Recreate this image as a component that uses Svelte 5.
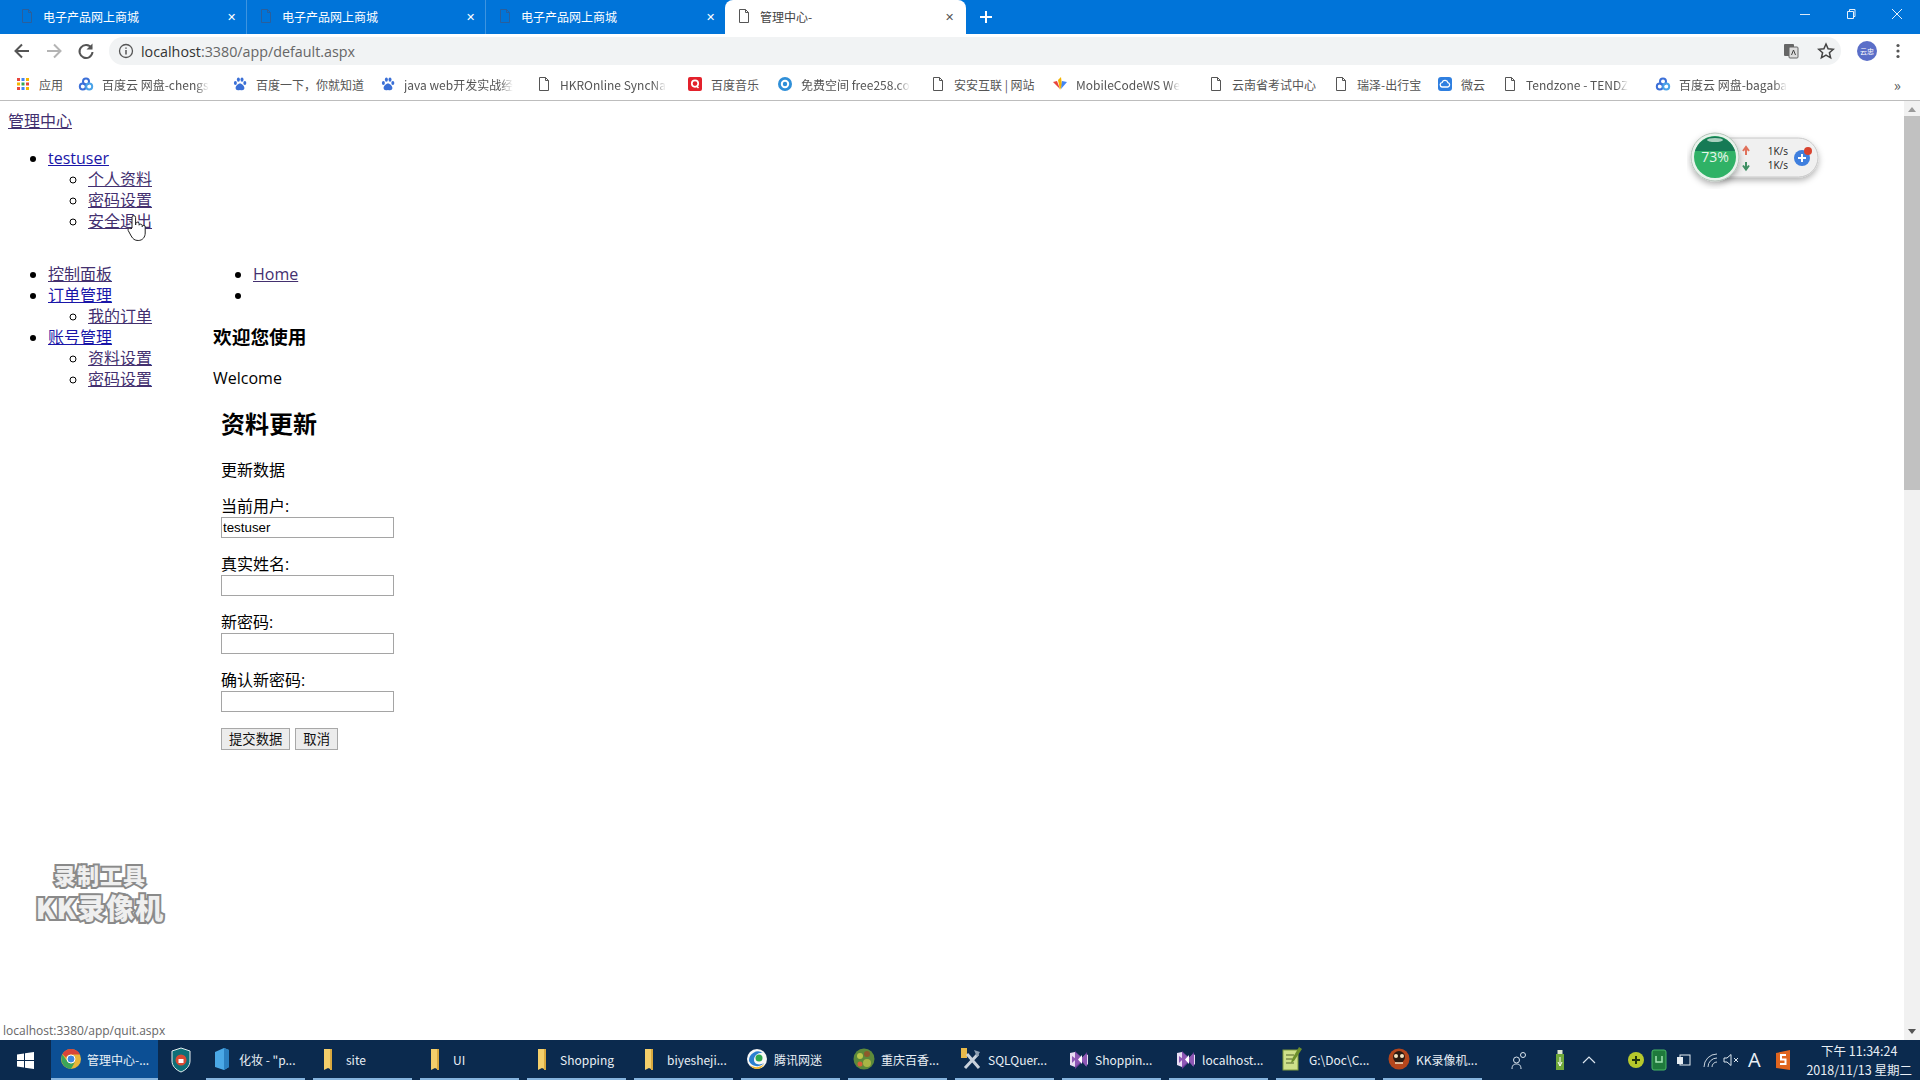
<script>
	const tabs = ['电子产品网上商城', '电子产品网上商城', '电子产品网上商城'];

	// labels stop where the browser fades them out
	const bookmarks = [
		{ label: '应用', icon: 'apps', width: 63, fade: false },
		{ label: '百度云 网盘-chengs', icon: 'pan', width: 154, fade: true },
		{ label: '百度一下，你就知道', icon: 'paw', width: 148, fade: false },
		{ label: 'java web开发实战经', icon: 'paw', width: 156, fade: true },
		{ label: 'HKROnline SyncNa', icon: 'doc', width: 151, fade: true },
		{ label: '百度音乐', icon: 'q', width: 90, fade: false },
		{ label: '免费空间 free258.co', icon: 'ring', width: 153, fade: true },
		{ label: '安安互联 | 网站', icon: 'doc', width: 122, fade: false },
		{ label: 'MobileCodeWS We', icon: 'm', width: 156, fade: true },
		{ label: '云南省考试中心', icon: 'doc', width: 125, fade: false },
		{ label: '瑞泽-出行宝', icon: 'doc', width: 104, fade: false },
		{ label: '微云', icon: 'cloud', width: 65, fade: false },
		{ label: 'Tendzone - TENDZ', icon: 'doc', width: 153, fade: true },
		{ label: '百度云 网盘-bagaba', icon: 'pan', width: 150, fade: true }
	];

	const sideMenu = [
		{ label: '控制面板', seen: true, sub: [] },
		{ label: '订单管理', seen: false, sub: ['我的订单'] },
		{ label: '账号管理', seen: false, sub: ['资料设置', '密码设置'] }
	];

	const fields = [
		{ label: '当前用户:', value: 'testuser' },
		{ label: '真实姓名:', value: '' },
		{ label: '新密码:', value: '' },
		{ label: '确认新密码:', value: '' }
	];

	const taskItems = [
		{ label: '化妆 - "p...', icon: 'box' },
		{ label: 'site', icon: 'folder' },
		{ label: 'UI', icon: 'folder' },
		{ label: 'Shopping', icon: 'folder' },
		{ label: 'biyesheji...', icon: 'folder' },
		{ label: '腾讯网迷', icon: 'tencent' },
		{ label: '重庆百香...', icon: 'photo' },
		{ label: 'SQLQuer...', icon: 'tools' },
		{ label: 'Shoppin...', icon: 'vs' },
		{ label: 'localhost...', icon: 'vs' },
		{ label: 'G:\\Doc\\C...', icon: 'note' },
		{ label: 'KK录像机...', icon: 'kk' }
	];
</script>

{#snippet markIcon(kind)}
	<svg class="mark" width="16" height="16" viewBox="0 0 16 16">
		{#if kind === 'apps'}
			{#each [2, 6.5, 11] as y, row}
				{#each [2, 6.5, 11] as x, col}
					<rect {x} {y} width="3" height="3" fill={['#e8453c', '#4285f4', '#f4b400', '#34a853'][(row * 2 + col) % 4]} />
				{/each}
			{/each}
		{:else if kind === 'pan'}
			<circle cx="8" cy="5.5" r="3" fill="none" stroke="#3b6fd8" stroke-width="2" />
			<circle cx="4.8" cy="10.5" r="3" fill="none" stroke="#3b6fd8" stroke-width="2" />
			<circle cx="11.2" cy="10.5" r="3" fill="none" stroke="#4aa3e8" stroke-width="2" />
		{:else if kind === 'paw'}
			<g fill="#3a6fd6">
				<ellipse cx="3.4" cy="7" rx="1.5" ry="2" />
				<ellipse cx="6.4" cy="3.6" rx="1.5" ry="2.2" />
				<ellipse cx="10" cy="3.6" rx="1.5" ry="2.2" />
				<ellipse cx="12.8" cy="7" rx="1.5" ry="2" />
				<path d="M8 7.5c-2 0-4.4 2.6-4.4 4.6 0 1.5 1.2 2.2 2.3 2.2.8 0 1.4-.3 2.1-.3s1.3.3 2.1.3c1.1 0 2.3-.7 2.3-2.2 0-2-2.4-4.6-4.4-4.6z" />
			</g>
		{:else if kind === 'doc'}
			<path d="M3.5 1.5h6l3 3v10h-9z M9.5 1.5v3h3" fill="#fff" stroke="#555" stroke-width="1" />
		{:else if kind === 'q'}
			<rect x="1" y="1" width="14" height="14" rx="2" fill="#e3212b" />
			<circle cx="8" cy="7.6" r="3.2" fill="none" stroke="#fff" stroke-width="1.7" />
			<path d="M9.5 10l2 2" stroke="#fff" stroke-width="1.6" />
		{:else if kind === 'ring'}
			<circle cx="8" cy="8" r="7" fill="#2f8fd8" />
			<circle cx="8" cy="8" r="3.2" fill="none" stroke="#fff" stroke-width="2" />
		{:else if kind === 'm'}
			<path d="M1 6l4-1 3 8z" fill="#e8453c" />
			<path d="M6 4l3-3 1 8-2 5z" fill="#f4b400" />
			<path d="M10 5l5 1-6 7z" fill="#4285f4" />
		{:else if kind === 'cloud'}
			<rect x="1" y="1" width="14" height="14" rx="3" fill="#2f7fe0" />
			<path d="M5 11a2.4 2.4 0 0 1 .2-4.700a3 3 0 0 1 5.700.4a2.200 2.200 0 0 1 0 4.300z" fill="none" stroke="#fff" stroke-width="1.300" />
		{/if}
	</svg>
{/snippet}

{#snippet taskIcon(kind)}
	<svg class="task-icon" width="22" height="26" viewBox="0 0 22 26">
		{#if kind === 'box'}
			<path d="M4 6l9-4 5 2v17l-5 3-9-3z" fill="#4aa8e6" />
			<path d="M13 2v22l5-3V4z" fill="#2b7fc0" />
		{:else if kind === 'folder'}
			<path d="M6 3h6l2 2v19l-4-2-4 2z" fill="#f4cf6b" />
			<path d="M12 3h2v21h-2z" fill="#d9a93f" />
		{:else if kind === 'tencent'}
			<circle cx="11" cy="13" r="10" fill="#f7f7f7" />
			<path d="M3 15a9 9 0 0 1 14-8c-4-1-9 2-9 7 0 4 5 6 10 3a9 9 0 0 1-15-2z" fill="#2a7fd0" />
			<path d="M4 19c4 3 10 3 14-1-1 3-4 5-7 5s-6-2-7-4z" fill="#f0b429" />
			<circle cx="13" cy="12" r="3.500" fill="#2fa84f" />
		{:else if kind === 'photo'}
			<circle cx="11" cy="13" r="10.500" fill="#5d8a3a" />
			<circle cx="7" cy="10" r="3" fill="#b9c64a" />
			<circle cx="14" cy="8" r="3" fill="#8d5a2b" />
			<circle cx="14" cy="17" r="4" fill="#a8b545" />
			<circle cx="7" cy="18" r="2.500" fill="#d65f3a" />
		{:else if kind === 'tools'}
			<rect x="1" y="2" width="6" height="10" fill="#e8b94a" />
			<path d="M5 22L18 8M7 8l12 14" stroke="#c9d2dc" stroke-width="3" />
			<path d="M14 4l6 2-3 5z" fill="#8ea0b3" />
		{:else if kind === 'vs'}
			<path d="M3 7l5-1 7 6 4-4 2 1v9l-2 2-4-5-7 6-5-2z" fill="#e8dcf3" />
			<path d="M8 5l7 7 5-6v15l-5-5-7 7z M5 10l4 3-4 4z" fill="#7c3fa8" opacity=".85" />
			<path d="M15 9v9l-4-4.500z" fill="#fff" />
		{:else if kind === 'note'}
			<rect x="2" y="4" width="15" height="20" fill="#cfe08a" stroke="#7e9a3c" />
			<path d="M5 9h8M5 13h6M5 17h8" stroke="#50622a" />
			<path d="M18 1l3 2-8 12-3 2 1-4z" fill="#6d8f2c" />
		{:else if kind === 'kk'}
			<circle cx="11" cy="13" r="10.500" fill="#b5461c" />
			<circle cx="11" cy="11" r="6" fill="#2a1a12" />
			<circle cx="8" cy="10" r="2" fill="#f3e2c0" />
			<circle cx="14" cy="10" r="2" fill="#f3e2c0" />
			<path d="M7 17h8" stroke="#f3e2c0" stroke-width="1.500" />
		{/if}
	</svg>
{/snippet}

<div class="screen">
	<header class="tabbar">
		{#each tabs as title}
			<div class="tab">
				<svg class="tab-doc" width="14" height="16" viewBox="0 0 14 16"><path d="M2.500 1.500h6l3 3v10h-9z M8.500 1.500v3h3" fill="none" stroke="#2a5f9c" /></svg>
				<span class="tab-title">{title}</span>
				<span class="tab-x">✕</span>
			</div>
		{/each}
		<div class="tab active">
			<svg class="tab-doc" width="14" height="16" viewBox="0 0 14 16"><path d="M2.500 1.500h6l3 3v10h-9z M8.500 1.500v3h3" fill="#fff" stroke="#555" /></svg>
			<span class="tab-title">管理中心-</span>
			<span class="tab-x">✕</span>
		</div>
		<svg class="new-tab" width="14" height="14" viewBox="0 0 14 14"><path d="M7 1v12M1 7h12" stroke="#fff" stroke-width="2" /></svg>
		<div class="window-btns">
			<svg width="12" height="12" viewBox="0 0 12 12"><path d="M1 6.500h10" stroke="#dbe9f7" /></svg>
			<svg width="12" height="12" viewBox="0 0 12 12"><path d="M2.500 3.500h6v7h-6z M4.500 3.500v-2h5.500v7h-1.500" fill="none" stroke="#e8f1fa" /></svg>
			<svg width="12" height="12" viewBox="0 0 12 12"><path d="M1 1l10 10M11 1L1 11" stroke="#e8f1fa" /></svg>
		</div>
	</header>

	<div class="toolbar">
		<svg width="18" height="18" viewBox="0 0 18 18"><path d="M16 9H3M9 2.500L2.500 9 9 15.500" fill="none" stroke="#555" stroke-width="2" /></svg>
		<svg width="18" height="18" viewBox="0 0 18 18"><path d="M2 9h13M9 2.500L15.500 9 9 15.500" fill="none" stroke="#b4b4b4" stroke-width="2" /></svg>
		<svg width="18" height="18" viewBox="0 0 18 18"><path d="M14.500 6A6.500 6.500 0 1 0 15.500 10" fill="none" stroke="#555" stroke-width="2" /><path d="M15.500 1.500v6h-6z" fill="#555" /></svg>
		<div class="omnibox">
			<svg width="16" height="16" viewBox="0 0 16 16"><circle cx="8" cy="8" r="6.500" fill="none" stroke="#555" stroke-width="1.300" /><path d="M8 7v4.500M8 4.500v1.300" stroke="#555" stroke-width="1.500" /></svg>
			<span class="url"><b>localhost</b>:3380/app/default.aspx</span>
			<svg class="translate" width="16" height="16" viewBox="0 0 16 16"><rect x="1" y="1" width="10" height="12" rx="1" fill="#666" /><rect x="6" y="4" width="9" height="11" rx="1" fill="#ddd" stroke="#666" /><path d="M8.500 12l2-5 2 5" fill="none" stroke="#444" /></svg>
			<svg class="star" width="18" height="18" viewBox="0 0 18 18"><path d="M9 2l2.100 4.800 5.200.5-3.900 3.400 1.200 5.100L9 13.100l-4.600 2.700 1.200-5.100L1.700 7.300l5.200-.5z" fill="none" stroke="#444" stroke-width="1.500" /></svg>
		</div>
		<span class="avatar">云忠</span>
		<svg width="4" height="16" viewBox="0 0 4 16"><circle cx="2" cy="2.500" r="1.600" fill="#555" /><circle cx="2" cy="8" r="1.600" fill="#555" /><circle cx="2" cy="13.500" r="1.600" fill="#555" /></svg>
	</div>

	<nav class="bookmarks">
		{#each bookmarks as mark}
			<div class="bookmark" style="width: {mark.width}px">
				{@render markIcon(mark.icon)}
				<span class="mark-label" class:fade={mark.fade}>{mark.label}</span>
			</div>
		{/each}
		<span class="more">»</span>
	</nav>

	<div class="viewport">
		<main class="page">
			<a class="seen" href="#top">管理中心</a>
			<ul class="user-menu">
				<li>
					<a href="#top">testuser</a>
					<ul>
						<li><a class="seen" href="#top">个人资料</a></li>
						<li><a class="seen" href="#top">密码设置</a></li>
						<li><a class="seen" href="#top">安全退出</a></li>
					</ul>
				</li>
			</ul>

			<div class="columns">
				<aside class="sidebar">
					<ul>
						{#each sideMenu as item}
							<li>
								<a class:seen={item.seen} href="#top">{item.label}</a>
								{#if item.sub.length}
									<ul>
										{#each item.sub as sub}
											<li><a class="seen" href="#top">{sub}</a></li>
										{/each}
									</ul>
								{/if}
							</li>
						{/each}
					</ul>
				</aside>

				<section class="content">
					<ul class="crumbs">
						<li><a class="seen" href="#top">Home</a></li>
						<li>&nbsp;</li>
					</ul>
					<h3>欢迎您使用</h3>
					<p>Welcome</p>
					<form class="panel">
						<h2>资料更新</h2>
						<p>更新数据</p>
						{#each fields as field}
							<label class="field">
								{field.label}
								<input type="text" value={field.value} />
							</label>
						{/each}
						<div class="actions">
							<button type="button">提交数据</button>
							<button type="button">取消</button>
						</div>
					</form>
				</section>
			</div>
		</main>

		<div class="scrollbar">
			<span class="arrow up"></span>
			<span class="thumb"></span>
			<span class="arrow down"></span>
		</div>

		<!-- overlays that sit on top of the page -->
		<svg class="hand" width="22" height="28" viewBox="0 0 22 28">
			<path d="M6 14V3.500a1.800 1.800 0 0 1 3.600 0V11l.2-1.600a1.700 1.700 0 0 1 3.300.3v1.500a1.600 1.600 0 0 1 3.100.3v1.200a1.500 1.500 0 0 1 3 .3V19c0 4-2.500 7.500-7 7.500-3.500 0-5.300-1.500-7-4.500l-3-5.500c-.8-1.700 1.500-3 2.800-1.500z" fill="#fff" stroke="#222" stroke-width="1" />
		</svg>

		<svg class="speed" width="140" height="64" viewBox="0 0 140 64">
			<defs>
				<filter id="soft" x="-20%" y="-20%" width="140%" height="150%">
					<feDropShadow dx="0" dy="3" stdDeviation="3" flood-color="#000" flood-opacity=".3" />
				</filter>
			</defs>
			<rect x="20" y="13" width="111" height="39" rx="19.500" fill="#f0f0f0" stroke="#c8c8c8" filter="url(#soft)" />
			<circle cx="28" cy="32" r="24" fill="#e9f2ec" stroke="#b5c4ba" filter="url(#soft)" />
			<circle cx="28" cy="32" r="21" fill="#2fb266" />
			<path d="M8 26a21 21 0 0 1 40 0z" fill="#167a55" />
			<ellipse cx="28" cy="15" rx="8" ry="2" fill="#cfe6da" opacity=".8" />
			<text x="28" y="37" text-anchor="middle" class="pct">73%</text>
			<path d="M59 30v-7M56 26l3-4 3 4" fill="none" stroke="#e0705a" stroke-width="2" />
			<path d="M59 37v7M56 40.500l3 4 3-4" fill="none" stroke="#3f8f63" stroke-width="2" />
			<text x="101" y="30" text-anchor="end" class="rate">1K/s</text>
			<text x="101" y="44" text-anchor="end" class="rate">1K/s</text>
			<circle cx="115" cy="33" r="8" fill="#3f7fde" />
			<path d="M115 29v8M111 33h8" stroke="#fff" stroke-width="2" />
			<circle cx="121" cy="26" r="4" fill="#d8432f" />
		</svg>

		<div class="watermark">
			<span class="wm-top">录制工具</span>
			<span class="wm-bottom">KK录像机</span>
		</div>

		<div class="status">localhost:3380/app/quit.aspx</div>
	</div>

	<footer class="taskbar">
		<div class="start">
			<svg width="17" height="17" viewBox="0 0 17 17"><path d="M0 2.500l7-1v6.500H0z M8 1.300L17 0v8H8z M0 9h7v6.500l-7-1z M8 9h9v8l-9-1.300z" fill="#fff" /></svg>
		</div>
		<div class="task current">
			<svg class="task-icon" width="22" height="26" viewBox="0 0 22 26">
				<circle cx="11" cy="13" r="10" fill="#e8b53a" />
				<path d="M2.500 8A10 10 0 0 1 20 8.500H11a5 5 0 0 0-5 3z" fill="#d9443a" />
				<path d="M2.500 8.500A10 10 0 0 0 11 23l4-7a5 5 0 0 1-8-1z" fill="#3ba55a" />
				<circle cx="11" cy="13" r="4" fill="#3f86e0" stroke="#fff" />
			</svg>
			<span>管理中心-...</span>
		</div>
		<div class="shield">
			<svg width="20" height="26" viewBox="0 0 20 26">
				<path d="M10 1l9 3v10c0 5-4 9-9 11-5-2-9-6-9-11V4z" fill="#0e6f78" stroke="#e8eef0" />
				<circle cx="10" cy="13" r="5.500" fill="#d94a33" />
				<rect x="7.500" y="12" width="5" height="4" fill="#fff" />
			</svg>
		</div>
		<div class="tasks">
			{#each taskItems as item}
				<div class="task">
					{@render taskIcon(item.icon)}
					<span>{item.label}</span>
				</div>
			{/each}
		</div>
		<div class="tray">
			<svg width="16" height="20" viewBox="0 0 16 20"><circle cx="5.500" cy="10" r="3" fill="none" stroke="#dce6ef" /><path d="M1 19c0-4 2-5 4.500-5s4.500 1 4.500 5" fill="none" stroke="#dce6ef" /><circle cx="12" cy="5" r="2.500" fill="none" stroke="#dce6ef" /></svg>
			<svg class="usb" width="10" height="22" viewBox="0 0 10 22"><rect x="1" y="5" width="8" height="16" fill="#6fa83a" /><rect x="2.500" y="1" width="5" height="4" fill="#dfe7d2" /><path d="M5 8v9M3 13l2 4 2-4" fill="none" stroke="#fff" /></svg>
			<svg width="14" height="10" viewBox="0 0 14 10"><path d="M1 8l6-6 6 6" fill="none" stroke="#dce6ef" stroke-width="1.200" /></svg>
			<svg class="guard" width="16" height="16" viewBox="0 0 16 16"><circle cx="8" cy="8" r="8" fill="#b7c92c" /><path d="M8 4v8M4 8h8" stroke="#22350c" stroke-width="2" /></svg>
			<svg class="tight" width="16" height="22" viewBox="0 0 16 22"><rect x="1" y="1" width="14" height="20" rx="2" fill="#1f7a3c" stroke="#49b864" /><path d="M5 7v6h6V7" fill="none" stroke="#a4e5b5" stroke-width="1.500" /></svg>
			<svg width="16" height="14" viewBox="0 0 16 14"><rect x="4" y="2" width="10" height="10" fill="none" stroke="#e6edf3" /><rect x="1" y="4" width="6" height="7" fill="#e6edf3" /></svg>
			<svg class="wifi" width="16" height="16" viewBox="0 0 16 16"><path d="M2 15a13 13 0 0 1 13-13M6 15a9 9 0 0 1 9-9M10 15a5 5 0 0 1 5-5" fill="none" stroke="#c8d3dd" /></svg>
			<svg class="volume" width="16" height="14" viewBox="0 0 16 14"><path d="M1 5h3l4-3.500v11L4 9H1z" fill="none" stroke="#dce6ef" /><path d="M11 5l4 4M15 5l-4 4" stroke="#dce6ef" /></svg>
			<span class="ime">A</span>
			<svg class="sogou" width="16" height="22" viewBox="0 0 16 22"><path d="M1 4l14-3v20l-14-2z" fill="#e0651f" /><path d="M11 6H6v4.500h4.500V15H5" fill="none" stroke="#fff" stroke-width="2" /></svg>
		</div>
		<div class="clock">
			<span>下午 11:34:24</span>
			<span>2018/11/13 星期二</span>
		</div>
	</footer>
</div>

<style>
	:global(body) {
		margin: 0;
		background: #fff;
	}

	.screen {
		width: 1920px;
		height: 1080px;
		display: flex;
		flex-direction: column;
		overflow: hidden;
		font-family: 'Noto Sans CJK SC', 'Open Sans', sans-serif;
		color: #000;
	}

	/* browser chrome */
	.tabbar {
		height: 34px;
		flex: none;
		display: flex;
		align-items: center;
		padding-left: 8px;
		background: #0074d9;
	}

	.tab {
		width: 239px;
		height: 34px;
		flex: none;
		display: flex;
		align-items: center;
		box-sizing: border-box;
		padding: 0 10px 2px 12px;
		border-right: 1px solid #3d94e0;
		color: #fff;
		font-size: 12px;
	}

	.tab:nth-child(3) {
		border-right: 0;
	}

	.tab.active {
		width: 241px;
		padding-right: 12px;
		border-right: 0;
		border-radius: 8px 8px 0 0;
		background: #fff;
		color: #444;
	}

	.tab-doc {
		flex: none;
		margin-right: 9px;
	}

	.tab-title {
		flex: 1;
	}

	.tab-x {
		font-size: 11px;
		line-height: 1;
	}

	.tab.active .tab-x {
		color: #555;
	}

	.new-tab {
		margin-left: 13px;
	}

	.window-btns {
		display: flex;
		gap: 34px;
		margin-left: auto;
		margin-right: 17px;
		margin-top: -6px;
	}

	.toolbar {
		height: 34px;
		flex: none;
		display: flex;
		align-items: center;
		gap: 14px;
		padding-left: 13px;
		background: #fff;
	}

	.omnibox {
		width: 1732px;
		height: 28px;
		display: flex;
		align-items: center;
		box-sizing: border-box;
		padding: 0 6px 0 9px;
		border-radius: 14px;
		background: #f1f3f4;
		color: #666;
	}

	.url {
		margin-left: 7px;
		font-family: 'Open Sans', sans-serif;
		font-size: 14.300px;
	}

	.url b {
		font-weight: 400;
		color: #333;
	}

	.translate {
		margin-left: auto;
	}

	.star {
		margin-left: 18px;
	}

	.avatar {
		width: 20px;
		height: 20px;
		border-radius: 50%;
		margin-left: 2px;
		margin-right: 5px;
		background: #5a6ec8;
		color: #fff;
		font-size: 7px;
		line-height: 20px;
		text-align: center;
	}

	.bookmarks {
		height: 33px;
		flex: none;
		display: flex;
		align-items: center;
		box-sizing: border-box;
		padding-left: 15px;
		border-bottom: 1px solid #bdbdbd;
		background: #fff;
		font-size: 12px;
		color: #555;
	}

	.bookmark {
		flex: none;
		display: flex;
		align-items: center;
		gap: 8px;
		box-sizing: border-box;
	}

	.mark {
		flex: none;
	}

	.mark-label {
		white-space: nowrap;
	}

	.mark-label.fade {
		-webkit-mask-image: linear-gradient(to right, #000 88%, transparent);
		mask-image: linear-gradient(to right, #000 88%, transparent);
	}

	.more {
		margin-left: auto;
		margin-right: 19px;
		font-size: 15px;
	}

	/* page itself */
	.viewport {
		position: relative;
		flex: 1;
		display: flex;
		min-height: 0;
		background: #fff;
	}

	.page {
		flex: 1;
		padding: 10px 8px 0;
		font-family: 'Open Sans', 'Noto Sans CJK SC', sans-serif;
		font-size: 16px;
		line-height: 21px;
	}

	a {
		color: #1a16a8;
	}

	a.seen {
		color: #43306f;
	}

	ul {
		margin: 0;
		padding-left: 40px;
	}

	.user-menu {
		margin: 16px 0 32px;
	}

	.columns {
		display: flex;
		align-items: flex-start;
	}

	.sidebar {
		width: 205px;
		flex: none;
	}

	.crumbs {
		margin-bottom: 20px;
	}

	h3 {
		margin: 0 0 20px;
		font-size: 18.720px;
		line-height: 22px;
		font-weight: 700;
	}

	.content p {
		margin: 0;
	}

	.panel {
		display: flex;
		flex-direction: column;
		align-items: flex-start;
		padding: 19px 8px 0;
	}

	h2 {
		margin: 0 0 20px;
		font-size: 24px;
		line-height: 32px;
		font-weight: 700;
	}

	.panel p {
		margin-bottom: 15px;
	}

	.field {
		display: flex;
		flex-direction: column;
		margin-bottom: 16px;
	}

	input {
		width: 173px;
		height: 21px;
		box-sizing: border-box;
		padding: 1px;
		border: 1px solid #a5a5a5;
		font-family: 'Liberation Sans', sans-serif;
		font-size: 13.330px;
	}

	.actions {
		display: flex;
		gap: 5px;
	}

	button {
		height: 22px;
		box-sizing: border-box;
		padding: 0 7px;
		border: 1px solid #a8a8a8;
		background: #ececec;
		font-family: 'Noto Sans CJK SC', sans-serif;
		font-size: 13.330px;
		line-height: 18px;
		color: #111;
	}

	.scrollbar {
		width: 16px;
		flex: none;
		display: flex;
		flex-direction: column;
		align-items: center;
		background: #f1f1f1;
	}

	.arrow {
		width: 0;
		height: 0;
		flex: none;
		border-left: 4px solid transparent;
		border-right: 4px solid transparent;
	}

	.arrow.up {
		margin-top: 6px;
		border-bottom: 5px solid #9a9a9a;
	}

	.arrow.down {
		margin-top: auto;
		margin-bottom: 6px;
		border-top: 5px solid #555;
	}

	.thumb {
		width: 16px;
		height: 374px;
		flex: none;
		margin-top: 4px;
		background: #c1c1c1;
	}

	.hand {
		position: absolute;
		left: 126px;
		top: 113px;
	}

	.speed {
		position: absolute;
		left: 1687px;
		top: 24px;
	}

	.pct {
		font-family: 'Open Sans', sans-serif;
		font-size: 14px;
		fill: #e6f5ea;
	}

	.rate {
		font-family: 'Open Sans', sans-serif;
		font-size: 10px;
		fill: #222;
	}

	.watermark {
		position: absolute;
		left: 30px;
		top: 760px;
		width: 140px;
		display: flex;
		flex-direction: column;
		align-items: center;
		font-weight: 900;
		color: #efefef;
		-webkit-text-stroke: 4px #8a8a8a;
		paint-order: stroke fill;
	}

	.wm-top {
		font-size: 22px;
		line-height: 27px;
		letter-spacing: 1px;
	}

	.wm-bottom {
		margin-top: 5px;
		font-size: 28px;
		line-height: 29px;
		letter-spacing: 1px;
		white-space: nowrap;
	}

	.status {
		position: absolute;
		left: 0;
		bottom: 0;
		padding: 1px 3px 2px;
		background: #fff;
		font-family: 'Open Sans', sans-serif;
		font-size: 12px;
		line-height: 15px;
		color: #666;
	}

	/* windows taskbar */
	.taskbar {
		height: 40px;
		flex: none;
		display: flex;
		align-items: center;
		background: #0b2a4e;
		color: #e9eff5;
		font-size: 12px;
	}

	.start {
		width: 51px;
		height: 40px;
		flex: none;
		display: flex;
		align-items: center;
		justify-content: center;
	}

	.task {
		width: 99px;
		height: 40px;
		flex: none;
		display: flex;
		align-items: center;
		gap: 6px;
		box-sizing: border-box;
		padding-left: 5px;
		border-bottom: 2px solid #86b4de;
		white-space: nowrap;
		overflow: hidden;
	}

	.task.current {
		width: 107px;
		padding-left: 9px;
		gap: 5px;
		background: #0c4f94;
	}

	.task-icon {
		flex: none;
	}

	.shield {
		width: 46px;
		flex: none;
		display: flex;
		justify-content: center;
		margin-right: 2px;
	}

	.tasks {
		display: flex;
		gap: 8px;
	}

	.tray {
		display: flex;
		align-items: center;
		gap: 9px;
		margin-left: 29px;
	}

	.usb {
		margin-left: 19px;
		margin-right: 8px;
	}

	.guard {
		margin-left: 23px;
	}

	.tight {
		margin-left: -2px;
	}

	.wifi {
		margin-left: 1px;
	}

	.volume {
		margin-left: -4px;
	}

	.sogou {
		margin-left: 5px;
	}

	.ime {
		font-family: 'Open Sans', sans-serif;
		font-size: 20px;
		line-height: 1;
	}

	.clock {
		display: flex;
		flex-direction: column;
		align-items: center;
		gap: 2px;
		margin-left: auto;
		margin-right: 8px;
		font-size: 12.500px;
		line-height: 17px;
	}
</style>
